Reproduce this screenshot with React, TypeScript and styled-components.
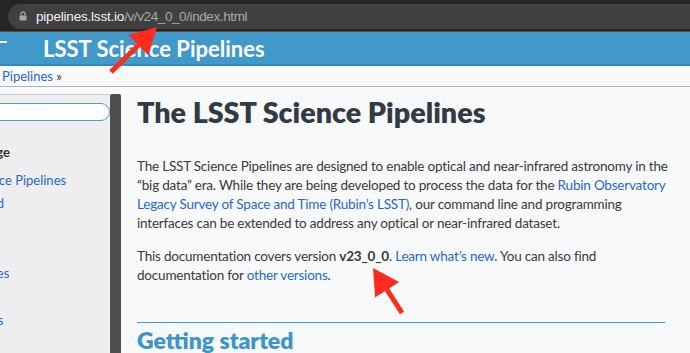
import styled, { createGlobalStyle } from 'styled-components'

const GlobalStyle = createGlobalStyle`
  body {
    margin: 0;
    background: #f8f9fb;
    font-family: Lato, "Open Sans", sans-serif;
  }
`

const Page = styled.div`
  position: relative;
  width: 690px;
  height: 353px;
  overflow: hidden;
  background: #f8f9fb;
`

const BrowserBar = styled.div`
  display: flex;
  align-items: center;
  height: 32px;
  padding: 4px 0 3px 8px;
  box-sizing: border-box;
  background: #262626;
  border-bottom: 1px solid #5a4a40;
`

const AddressPill = styled.div`
  flex: 1;
  display: flex;
  align-items: center;
  gap: 9px;
  height: 25px;
  padding-left: 11px;
  background: #404040;
  border-radius: 13px 0 0 13px;
  font-family: "Liberation Sans", Arial, sans-serif;
  font-size: 13.5px;
`

const Host = styled.span`
  color: #f2f2f2;
  letter-spacing: -0.2px;
`

const Path = styled.span`
  color: #a9a9a9;
  letter-spacing: -0.4px;
`

const Header = styled.div`
  display: flex;
  align-items: center;
  height: 32px;
  background: #4099c8;
  border-bottom: 2px solid #2e8bc0;
`

const MenuStub = styled.span`
  width: 7px;
  height: 2px;
  margin-bottom: 13px;
  background: #ffffff;
`

const SiteTitle = styled.div`
  margin-left: 36px;
  color: #ffffff;
  font-weight: 700;
  font-size: 22px;
`

const Breadcrumbs = styled.div`
  height: 20px;
  line-height: 20px;
  padding-left: 2px;
  border-bottom: 1px solid #b4b4b4;
  font-size: 13px;
  color: #333;
`

const Link = styled.a`
  color: #1f67d6;
  text-decoration: none;
`

const Body = styled.div`
  display: flex;
`

const Sidebar = styled.div`
  width: 110px;
  height: 260px;
  margin-top: 7px;
  background: #eeeeee;
  border-top: 1px solid #cdcdcd;
  overflow: hidden;
  font-size: 13px;
`

const Search = styled.div`
  width: 128px;
  height: 16px;
  margin: 8px 0 0 -20px;
  background: #ffffff;
  border: 1px solid #4b9fce;
  border-radius: 9px;
`

const NavList = styled.div`
  display: flex;
  flex-direction: column;
  align-items: flex-start;
  white-space: nowrap;
`

const NavItem = styled.div<{ $top: number; $shift: number; $bold?: boolean }>`
  margin-top: ${(p) => p.$top}px;
  margin-left: ${(p) => p.$shift}px;
  line-height: 16px;
  font-weight: ${(p) => (p.$bold ? 700 : 400)};
  color: ${(p) => (p.$bold ? '#333' : '#1f67d6')};
`

const Scrollbar = styled.div`
  width: 11px;
  height: 260px;
  margin-top: 7px;
  background: #4e4e4e;
  border-radius: 2px 2px 0 0;
`

const Main = styled.div`
  flex: 1;
  padding: 0 20px 0 16px;
  color: #3a3a3a;
`

const Title = styled.h1`
  margin: 10px 0 0;
  font-size: 28.7px;
  line-height: 30px;
  font-weight: 800;
  color: #2f3b45;
`

const Para = styled.p`
  margin: 30px 0 0;
  font-size: 13.5px;
  line-height: 19px;
  letter-spacing: -0.2px;
  white-space: nowrap;
`

const Para2 = styled(Para)`
  margin-top: 14px;
`

const Rule = styled.hr`
  width: 528px;
  margin: 37px 0 0;
  border: none;
  border-top: 1px solid #3f9ac9;
`

const Section = styled.h2`
  margin: 3px 0 0;
  font-size: 23px;
  font-weight: 800;
  color: #3d96c8;
`

const Overlay = styled.svg`
  position: absolute;
  left: 0;
  top: 0;
  pointer-events: none;
`

function Arrow({ tail, tip, size = 26 }: { tail: [number, number]; tip: [number, number]; size?: number }) {
  const [x1, y1] = tail
  const [x2, y2] = tip
  const len = Math.hypot(x2 - x1, y2 - y1)
  const ux = (x2 - x1) / len
  const uy = (y2 - y1) / len
  const bx = x2 - ux * size
  const by = y2 - uy * size
  const half = size * 0.55
  return (
    <g fill="#ff2b1c" stroke="#ff2b1c">
      <line x1={x1} y1={y1} x2={bx + ux * 2} y2={by + uy * 2} strokeWidth={5} />
      <polygon
        stroke="none"
        points={`${x2},${y2} ${bx - uy * half},${by + ux * half} ${bx + uy * half},${by - ux * half}`}
      />
    </g>
  )
}

export default function App() {
  return (
    <Page>
      <GlobalStyle />
      <BrowserBar>
        <AddressPill>
          <svg width="8" height="10" viewBox="0 0 8 10">
            <path d="M2 4.5V3a2 2 0 0 1 4 0v1.5" fill="none" stroke="#a5a5a5" strokeWidth="1.3" />
            <rect x="0.5" y="4.5" width="7" height="5" rx="1" fill="#a5a5a5" />
          </svg>
          <span>
            <Host>pipelines.lsst.io</Host>
            <Path>/v/v24_0_0/index.html</Path>
          </span>
        </AddressPill>
      </BrowserBar>
      <Header>
        <MenuStub />
        <SiteTitle>LSST Science Pipelines</SiteTitle>
      </Header>
      <Breadcrumbs>
        <Link>Pipelines</Link> »
      </Breadcrumbs>
      <Body>
        <Sidebar>
          <Search />
          <NavList>
            <NavItem $top={23} $shift={-45} $bold>
              This page
            </NavItem>
            <NavItem $top={12} $shift={-88}>
              The LSST Science Pipelines
            </NavItem>
            <NavItem $top={7} $shift={-82}>
              Getting started
            </NavItem>
            <NavItem $top={54} $shift={-40}>
              Modules
            </NavItem>
            <NavItem $top={31} $shift={-49}>
              Packages
            </NavItem>
          </NavList>
        </Sidebar>
        <Scrollbar />
        <Main>
          <Title>The LSST Science Pipelines</Title>
          <Para>
            The LSST Science Pipelines are designed to enable optical and near-infrared astronomy in the
            <br />
            “big data” era. While they are being developed to process the data for the{' '}
            <Link>Rubin Observatory</Link>
            <br />
            <Link>Legacy Survey of Space and Time (Rubin’s LSST)</Link>, our command line and programming
            <br />
            interfaces can be extended to address any optical or near-infrared dataset.
          </Para>
          <Para2>
            This documentation covers version <b>v23_0_0</b>. <Link>Learn what’s new</Link>. You can also find
            <br />
            documentation for <Link>other versions</Link>.
          </Para2>
          <Rule />
          <Section>Getting started</Section>
        </Main>
      </Body>
      <Overlay width="690" height="353">
        <Arrow tail={[111, 72]} tip={[157, 27]} />
        <Arrow tail={[402, 313]} tip={[373, 268]} />
      </Overlay>
    </Page>
  )
}
